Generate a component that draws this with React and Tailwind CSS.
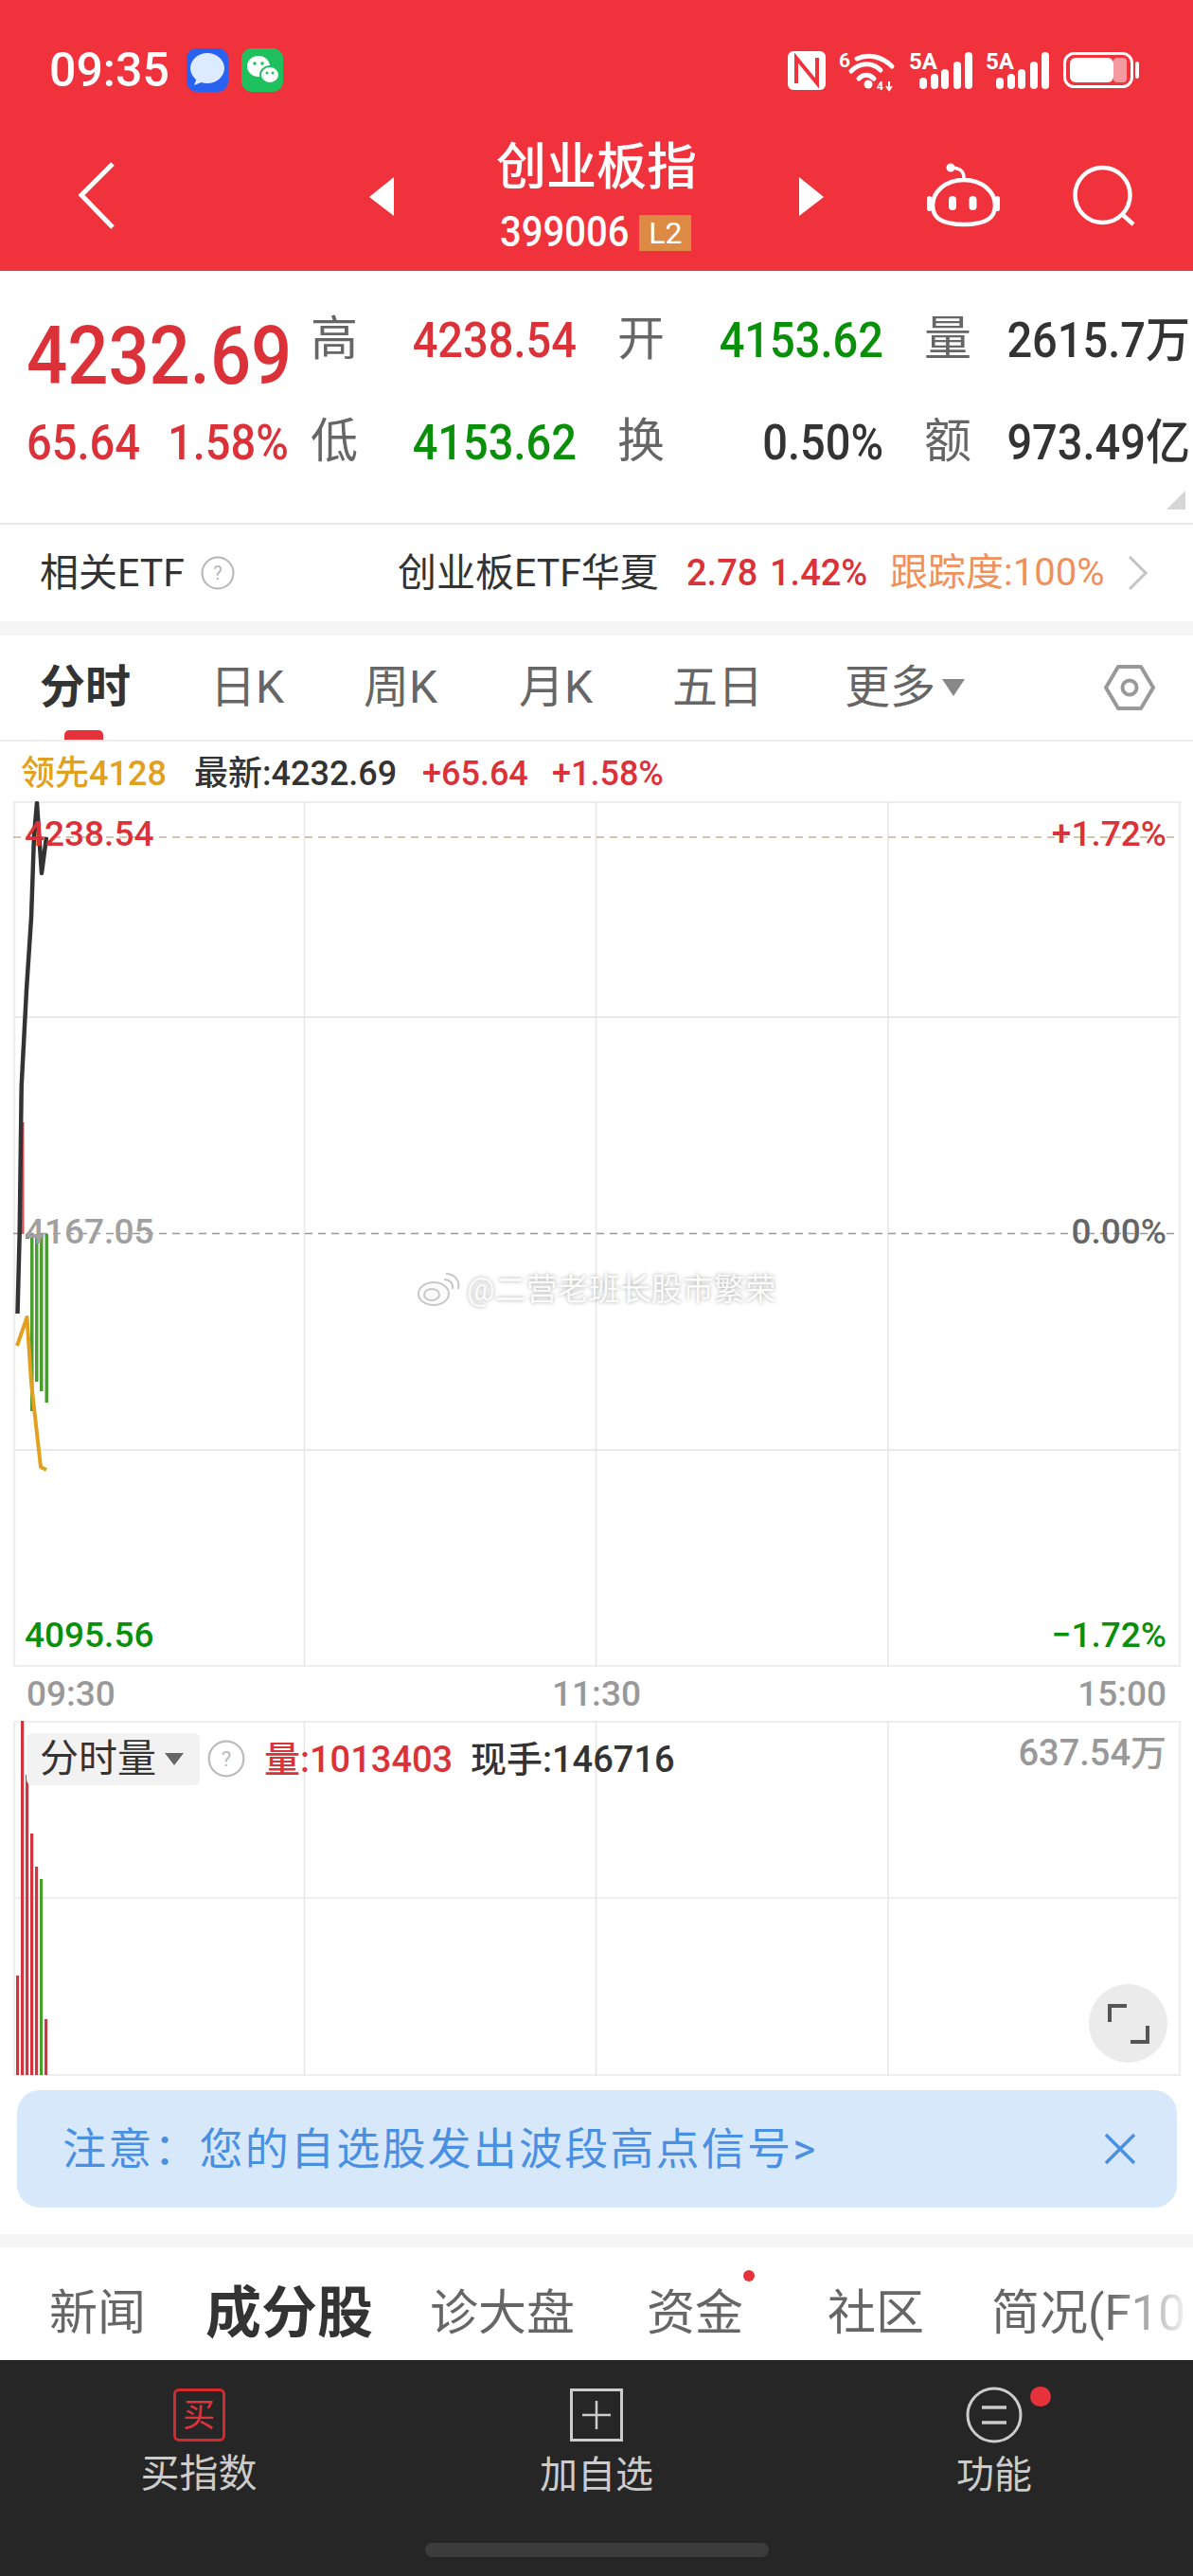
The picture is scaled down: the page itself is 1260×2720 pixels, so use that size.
import React from "react";

const RED = "text-[#db323a]";
const GREEN = "text-[#0a8f0a]";

function Num({ className = "", children }) {
  return <span className={`inline-block scale-y-[1.1] ${className}`}>{children}</span>;
}

function Stat({ label, value, color, w = "w-[279px]" }) {
  return (
    <div className={`flex h-12 items-center justify-between ${w}`}>
      <span className="-ml-[2px] text-[50px] leading-none text-[#666666]">{label}</span>
      <Num className={`text-[47px] font-medium leading-none ${color}`}>{value}</Num>
    </div>
  );
}

function StatusBar() {
  return (
    <div className="flex h-[136px] items-start pt-[51px] text-white">
      <span className="ml-[52px] w-[145px] text-[50px] font-medium leading-[46px]">09:35</span>
      <svg width="44" height="46" viewBox="0 0 44 46" className="block">
        <rect width="44" height="46" rx="11" fill="#2a62f0" />
        <ellipse cx="22" cy="21" rx="18" ry="16" fill="#dcebff" />
        <path d="M11 31l-3 8 10-4z" fill="#dcebff" />
      </svg>
      <svg width="44" height="46" viewBox="0 0 44 46" className="ml-[14px] block">
        <rect width="44" height="46" rx="11" fill="#1fc15f" />
        <ellipse cx="18" cy="19" rx="12" ry="11" fill="#fff" />
        <ellipse cx="30" cy="28" rx="10" ry="9" fill="#fff" stroke="#1fc15f" strokeWidth="2" />
        <circle cx="14" cy="16" r="1.8" fill="#1fc15f" />
        <circle cx="22" cy="16" r="1.8" fill="#1fc15f" />
        <circle cx="27" cy="26" r="1.5" fill="#1fc15f" />
        <circle cx="33" cy="26" r="1.5" fill="#1fc15f" />
      </svg>
      <svg width="380" height="46" viewBox="832 51 380 46" className="ml-[533px] block">
        <rect x="832" y="54" width="40" height="41" rx="6" fill="#fff" />
        <path d="M841 88V61l22 27V61" fill="none" stroke="#ef323b" strokeWidth="4" />
        <text x="886" y="71" fill="#fff" fontSize="21" fontWeight="700">6</text>
        <path d="M905 62c12-6 27-2 37 8M899 75c9-9 22-10 31-1M907 83c5-5 11-5 16 0" fill="none" stroke="#fff" strokeWidth="5" strokeLinecap="round" />
        <circle cx="917" cy="89" r="4.5" fill="#fff" />
        <text x="926" y="95" fill="#fff" fontSize="12" fontWeight="700">4</text>
        <path d="M939 86v9M936 91l3 4 3-4" fill="none" stroke="#fff" strokeWidth="2" />
        {[0, 81].map((dx) => (
          <g key={dx} transform={`translate(${dx} 0)`}>
            <text x="960" y="73" fill="#fff" fontSize="24" fontWeight="700">5A</text>
            <rect x="971" y="82" width="8" height="12" rx="4" fill="#fff" />
            <rect x="983" y="78" width="8" height="16" rx="4" fill="#fff" />
            <rect x="994" y="73" width="8" height="21" rx="4" fill="#fff" />
            <rect x="1007" y="65" width="8" height="29" rx="4" fill="#fff" />
            <rect x="1019" y="55" width="8" height="39" rx="4" fill="#fff" />
          </g>
        ))}
        <rect x="1124.5" y="56.5" width="71" height="35" rx="10" fill="none" stroke="#fff" strokeWidth="3" />
        <rect x="1130" y="61" width="46" height="26" rx="6" fill="#fff" />
        <rect x="1176" y="61" width="14" height="26" rx="4" fill="#f29aa0" />
        <rect x="1199" y="65" width="4" height="18" rx="2" fill="#fff" />
      </svg>
    </div>
  );
}

function NavBar() {
  return (
    <div className="relative h-[150px] text-white">
      <svg width="1260" height="150" viewBox="0 136 1260 150" className="block">
        <path d="M119 173L86 206l33 34" fill="none" stroke="#fff" strokeWidth="5" />
        <path d="M416 187v41l-26-20z" fill="#fff" />
        <path d="M844 187v41l26-20z" fill="#fff" />
        <path d="M1018 188c0-6-3-9-7-10-3-1-5-1-7-1" fill="none" stroke="#fff" strokeWidth="3.5" strokeLinecap="round" />
        <circle cx="1004" cy="177" r="4.5" fill="#fff" />
        <path d="M1018 190c20 0 33 13 33 27 0 14-11 20-33 20s-33-6-33-20c0-14 13-27 33-27z" fill="none" stroke="#fff" strokeWidth="4.5" />
        <rect x="979" y="207" width="5" height="16" rx="2.5" fill="#fff" />
        <rect x="1051" y="207" width="5" height="16" rx="2.5" fill="#fff" />
        <rect x="1002" y="207" width="8" height="15" rx="4" fill="#fff" />
        <rect x="1023.5" y="207" width="8" height="15" rx="4" fill="#fff" />
        <circle cx="1164.5" cy="206" r="29" fill="none" stroke="#fff" strokeWidth="4.5" />
        <path d="M1186 227l11 10" stroke="#fff" strokeWidth="4.5" />
      </svg>
      <div className="absolute left-[524px] top-[9px] flex w-[212px] flex-col items-start">
        <span className="w-[212px] whitespace-nowrap text-center text-[53px] font-medium leading-[64px]">创业板指</span>
        <div className="mt-[17px] flex items-center">
          <Num className="ml-[4px] text-[40px] font-medium leading-[40px]">399006</Num>
          <span className="ml-[11px] flex h-[38px] w-[55px] items-center justify-center bg-[#dd8a45] text-[32px] leading-none">L2</span>
        </div>
      </div>
    </div>
  );
}

function Quote() {
  return (
    <section className="relative flex h-[268px] border-b-2 border-[#e9e9e9] pt-[48px]">
      <div className={`w-[330px] pl-[28px] ${RED}`}>
        <div className="flex h-[84px] items-center">
          <Num className="scale-y-[1.13] text-[76px] font-medium leading-none">4232.69</Num>
        </div>
        <div className="mt-[30px] flex h-9 items-center">
          <Num className="w-[149px] text-[47px] font-medium leading-none">65.64</Num>
          <Num className="text-[47px] font-medium leading-none">1.58%</Num>
        </div>
      </div>
      <div className="grid h-[159px] grid-cols-[279px_279px_279px] grid-rows-[48px_48px] gap-x-[45px] gap-y-[60px]">
        <Stat label="高" value="4238.54" color={RED} />
        <Stat label="开" value="4153.62" color={GREEN} />
        <Stat label="量" value="2615.7万" color="text-[#333333]" />
        <Stat label="低" value="4153.62" color={GREEN} />
        <Stat label="换" value="0.50%" color="text-[#333333]" />
        <Stat label="额" value="973.49亿" color="text-[#333333]" />
      </div>
      <svg width="20" height="20" viewBox="0 0 20 20" className="absolute bottom-[14px] right-[8px] block">
        <path d="M20 0v20H0z" fill="#d6d6d6" />
      </svg>
    </section>
  );
}

function QIcon({ d = 36, color = "#b5b5b5" }) {
  return (
    <svg width={d} height={d} viewBox="0 0 36 36" className="block shrink-0">
      <circle cx="18" cy="18" r="16.5" fill="none" stroke={color} strokeWidth="2" />
      <text x="18" y="25" textAnchor="middle" fontSize="20" fill={color}>?</text>
    </svg>
  );
}

function EtfRow() {
  return (
    <section className="box-content flex h-[102px] items-center whitespace-nowrap border-b-[15px] border-[#f5f5f5] pt-0">
      <span className="ml-[42px] w-[170px] text-[41px] leading-none text-[#333333]">相关ETF</span>
      <span className="w-[208px]"><QIcon /></span>
      <span className="w-[305px] text-[41px] leading-none text-[#333333]">创业板ETF华夏</span>
      <span className={`w-[88px] text-[38px] font-medium leading-none ${RED}`}>2.78</span>
      <span className={`w-[127px] text-[38px] font-medium leading-none ${RED}`}>1.42%</span>
      <span className="w-[250px] text-[40px] leading-none text-[#f0905a]">跟踪度:100%</span>
      <svg width="24" height="38" viewBox="0 0 24 38" className="block">
        <path d="M3 2l17 17L3 36" fill="none" stroke="#c4c4c4" strokeWidth="3" />
      </svg>
    </section>
  );
}

function PeriodTabs() {
  const tab = "text-[48px] leading-none text-[#666666]";
  return (
    <section className="relative flex h-[112px] items-center border-b-2 border-[#ededed] pl-[42px]">
      <span className="w-[180px] text-[48px] font-bold leading-none text-[#333333]">分时</span>
      <span className={`w-[162px] ${tab}`}>日K</span>
      <span className={`w-[164px] ${tab}`}>周K</span>
      <span className={`w-[162px] ${tab}`}>月K</span>
      <span className={`w-[182px] ${tab}`}>五日</span>
      <span className={`w-[103px] ${tab}`}>更多</span>
      <svg width="24" height="18" viewBox="0 0 24 18" className="block"><path d="M0 0h24L12 18z" fill="#888888" /></svg>
      <svg width="54" height="50" viewBox="0 0 54 50" className="ml-[147px] block">
        <path d="M15 3h24l13 22-13 22H15L2 25z" fill="none" stroke="#999999" strokeWidth="4" strokeLinejoin="round" />
        <circle cx="27" cy="25" r="7.5" fill="none" stroke="#999999" strokeWidth="4" />
      </svg>
      <span className="absolute bottom-0 left-[68px] h-[10px] w-[41px] rounded-t-[5px] bg-[#e6323a]" />
    </section>
  );
}

function Legend() {
  return (
    <div className="flex h-[63px] items-center pt-[5px] text-[36px] font-medium leading-none">
      <span className="ml-[22px] w-[183px] text-[#e0a020]">领先4128</span>
      <span className="w-[241px] text-[#333333]">最新:4232.69</span>
      <span className={`w-[137px] ${RED}`}>+65.64</span>
      <span className={RED}>+1.58%</span>
    </div>
  );
}

function PriceChart() {
  const label = "absolute text-[37px] font-medium leading-[36px]";
  return (
    <section className="relative h-[914px]">
      <svg width="1260" height="914" viewBox="0 846 1260 914" className="block">
        {[847, 1759].map((y) => <path key={y} d={`M14 ${y}H1247`} stroke="#eeeeee" strokeWidth="2" />)}
        {[1074, 1531].map((y) => <path key={y} d={`M14 ${y}H1246`} stroke="#e2e2e2" strokeWidth="1.5" />)}
        {[15, 1246].map((x) => <path key={x} d={`M${x} 846V1760`} stroke="#eeeeee" strokeWidth="2.5" />)}
        {[321.5, 629.5, 938].map((x) => <path key={x} d={`M${x} 846V1760`} stroke="#e6e6e6" strokeWidth="1.5" />)}
        <path d="M14 884H1246" stroke="#c4b594" strokeWidth="1.5" strokeDasharray="8 6" />
        <path d="M14 1302.5H1246" stroke="#999999" strokeWidth="1.5" strokeDasharray="8 6" />
        <rect x="22" y="1185" width="3.5" height="118" fill="#e4505a" />
        <rect x="27" y="1303" width="4" height="5" fill="#4a9e30" />
        <rect x="32" y="1303" width="3.5" height="187" fill="#4a9e30" />
        <rect x="37" y="1303" width="3.5" height="156" fill="#4a9e30" />
        <rect x="42" y="1303" width="3.5" height="166" fill="#4a9e30" />
        <rect x="47.5" y="1303" width="3.5" height="178" fill="#4a9e30" />
        <path d="M18.5 1387L20.7 1302 22.7 1147 28 1045 33 969 36 882 39 848 44 922 49 884" fill="none" stroke="#333333" strokeWidth="4.5" strokeLinejoin="round" />
        <path d="M18 1421L28.5 1391 33 1460 43 1549 49 1552" fill="none" stroke="#e2a020" strokeWidth="4" strokeLinejoin="round" />
      </svg>
      <span className={`${label} left-[26px] top-[17px] ${RED}`}>4238.54</span>
      <span className={`${label} right-[28px] top-[17px] ${RED}`}>+1.72%</span>
      <span className={`${label} left-[26px] top-[437px] text-[#a0a0a0]`}>4167.05</span>
      <span className={`${label} right-[28px] top-[437px] text-[#666666]`}>0.00%</span>
      <span className={`${label} left-[26px] top-[863px] ${GREEN}`}>4095.56</span>
      <span className={`${label} right-[28px] top-[863px] ${GREEN}`}>−1.72%</span>
      <div className="absolute left-[441px] top-[497px] flex items-center text-[33px] leading-none text-[#fbfbfb] [text-shadow:0_0_4px_rgba(0,0,0,0.35)]">
        <svg width="46" height="36" viewBox="0 0 46 36" className="mr-[6px] block">
          <ellipse cx="17" cy="23" rx="16" ry="12" fill="#fbfbfb" stroke="#c8c8c8" strokeWidth="2" />
          <ellipse cx="15" cy="24" rx="8" ry="6" fill="none" stroke="#c8c8c8" strokeWidth="2" />
          <path d="M28 8c6 0 10 4 9 10M30 2c9 0 15 7 13 16" fill="none" stroke="#c8c8c8" strokeWidth="2" />
        </svg>
        @二营老班长股市繁荣
      </div>
    </section>
  );
}

function TimeAxis() {
  return (
    <div className="flex h-[57px] items-center justify-between px-[28px] text-[37px] font-medium leading-none text-[#999999]">
      <span>09:30</span>
      <span>11:30</span>
      <span>15:00</span>
    </div>
  );
}

function VolumeChart() {
  const bars = [
    [17, 2086, "#d2353d"], [22, 1817, "#d2353d"], [27, 1874, "#d2353d"], [32, 1936, "#d2353d"],
    [37, 1971, "#d2353d"], [42, 1984, "#4a9e30"], [47, 2132, "#d2353d"],
  ];
  return (
    <section className="relative h-[375px]">
      <svg width="1260" height="375" viewBox="0 1817 1260 375" className="block">
        {[1818, 2191].map((y) => <path key={y} d={`M14 ${y}H1247`} stroke="#eeeeee" strokeWidth="2" />)}
        <path d="M14 2004H1247" stroke="#eeeeee" strokeWidth="2" />
        {[15, 1246].map((x) => <path key={x} d={`M${x} 1817V2192`} stroke="#eeeeee" strokeWidth="2.5" />)}
        {[321.5, 629.5, 938].map((x) => <path key={x} d={`M${x} 1817V2192`} stroke="#e6e6e6" strokeWidth="1.5" />)}
        {bars.map(([x, y, c]) => <rect key={x} x={x} y={y} width="3.2" height={2191 - y} fill={c} />)}
      </svg>
      <div className="absolute left-[28px] top-[13px] flex h-[55px] w-[183px] items-center rounded-[6px] bg-[#f2f2f2] pl-[14px] text-[41px] leading-none text-[#333333]">
        分时量
        <svg width="20" height="13" viewBox="0 0 20 13" className="ml-[9px] block"><path d="M0 0h20L10 13z" fill="#666666" /></svg>
      </div>
      <div className="absolute left-[219px] top-[20px]"><QIcon d={40} color="#bcbcbc" /></div>
      <div className={`absolute left-[279px] top-[21px] text-[38px] font-medium leading-[40px] ${RED}`}>量:1013403</div>
      <div className="absolute left-[497px] top-[21px] text-[38px] font-medium leading-[40px] text-[#333333]">现手:146716</div>
      <div className="absolute right-[28px] top-[16px] text-[38px] font-medium leading-[36px] text-[#999999]">637.54万</div>
      <div className="absolute left-[1150px] top-[278px] flex h-[83px] w-[83px] items-center justify-center rounded-full bg-[#ebebeb]">
        <svg width="44" height="44" viewBox="0 0 44 44" className="block">
          <path d="M2 20V3h18M42 24v17H24" fill="none" stroke="#555555" strokeWidth="4" />
        </svg>
      </div>
    </section>
  );
}

function Notice() {
  return (
    <div className="mx-[18px] mt-[15px] flex h-[124px] w-[1225px] items-center justify-between rounded-[24px] bg-[#d8e8fb] pl-[48px] pr-[43px] text-[#4a90e2]">
      <span className="text-[46px] leading-none tracking-[2.2px]">注意：您的自选股发出波段高点信号&gt;</span>
      <svg width="34" height="34" viewBox="0 0 34 34" className="block">
        <path d="M2 2l30 30M32 2L2 32" stroke="#4a90e2" strokeWidth="3.5" />
      </svg>
    </div>
  );
}

function InfoTabs() {
  const tab = "text-[51px] leading-none text-[#666666]";
  return (
    <section className="relative mt-[28px] box-content flex h-[99px] items-center overflow-hidden whitespace-nowrap border-t-[14px] border-[#f5f5f5] pl-[52px] pt-[20px]">
      <span className={`w-[165px] shrink-0 ${tab}`}>新闻</span>
      <span className="w-[237px] shrink-0 text-[59px] font-bold leading-none text-[#333333]">成分股</span>
      <span className={`w-[229px] shrink-0 ${tab}`}>诊大盘</span>
      <span className={`relative w-[191px] shrink-0 ${tab}`}>
        资金
        <span className="absolute left-[102px] top-[-20px] h-3 w-3 rounded-full bg-[#e6323a]" />
      </span>
      <span className={`w-[173px] shrink-0 ${tab}`}>社区</span>
      <span className={`shrink-0 ${tab}`}>简况(F10</span>
      <div className="absolute bottom-0 right-0 top-0 w-[90px] bg-gradient-to-r from-white/0 to-white" />
    </section>
  );
}

function BottomBar() {
  const lab = "text-[40px] leading-none text-[#cccccc]";
  return (
    <footer className="relative h-[228px] bg-[#262626]">
      <div className="grid grid-cols-3 pt-[30px]">
        <div className="flex flex-col items-center">
          <div className="flex h-[56px] w-[55px] items-center justify-center rounded-[6px] border-[3px] border-[#d4282f] text-[34px] leading-none text-[#e0323a]">买</div>
          <span className={`mt-[14px] text-[41px] leading-none text-[#cccccc]`}>买指数</span>
        </div>
        <div className="flex flex-col items-center">
          <svg width="56" height="56" viewBox="0 0 56 56" className="block">
            <rect x="1.5" y="1.5" width="53" height="53" fill="none" stroke="#cccccc" strokeWidth="3" />
            <path d="M28 13v30M13 28h30" stroke="#cccccc" strokeWidth="2.5" />
          </svg>
          <span className={`mt-[16px] ${lab}`}>加自选</span>
        </div>
        <div className="relative flex flex-col items-center">
          <svg width="60" height="60" viewBox="0 0 60 60" className="-mt-[2px] block">
            <circle cx="30" cy="30" r="28" fill="none" stroke="#cccccc" strokeWidth="3" />
            <path d="M17 22h26M17 38h26" stroke="#cccccc" strokeWidth="3.5" />
          </svg>
          <span className="absolute left-[248px] top-[-2px] h-[21px] w-[22px] rounded-full bg-[#e6323a]" />
          <span className={`mt-[14px] ${lab}`}>功能</span>
        </div>
      </div>
      <div className="absolute bottom-[20px] left-[449px] h-[15px] w-[363px] rounded-[8px] bg-[#3c3c3c]" />
    </footer>
  );
}

export default function App() {
  return (
    <div className="h-[2720px] w-[1260px] overflow-hidden bg-white [font-family:Roboto,'Noto_Sans_CJK_SC',sans-serif]">
      <header className="h-[286px] bg-[#ef323b]">
        <StatusBar />
        <NavBar />
      </header>
      <Quote />
      <EtfRow />
      <PeriodTabs />
      <Legend />
      <PriceChart />
      <TimeAxis />
      <VolumeChart />
      <Notice />
      <InfoTabs />
      <BottomBar />
    </div>
  );
}
